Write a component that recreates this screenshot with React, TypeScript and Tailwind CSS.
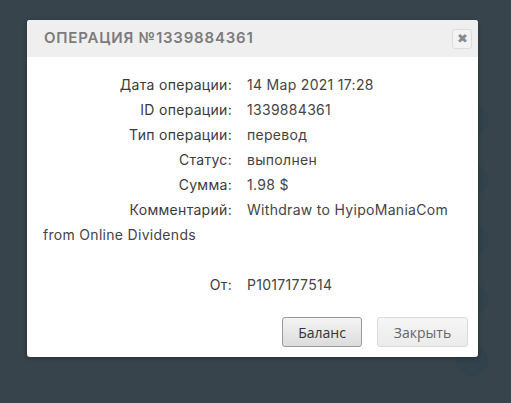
export default function App() {
  const rows = [
    ["Дата операции:", "14 Мар 2021 17:28"],
    ["ID операции:", "1339884361"],
    ["Тип операции:", "перевод"],
    ["Статус:", "выполнен"],
    ["Сумма:", "1.98 $"],
  ];

  return (
    <div className="relative h-[403px] w-[511px] overflow-hidden bg-[#37444c] font-['Inter',sans-serif]">
      {/* faint background dots behind the modal */}
      <div className="absolute top-[104px] left-[456px] h-8 w-8 rounded-full bg-[#31424c]" />
      <div className="absolute top-[164px] left-[456px] h-8 w-8 rounded-full bg-[#31424c]" />
      <div className="absolute top-[224px] left-[456px] h-8 w-8 rounded-full bg-[#31424c]" />
      <div className="absolute top-[284px] left-[456px] h-8 w-8 rounded-full bg-[#31424c]" />
      <div className="absolute top-[344px] left-[456px] h-8 w-8 rounded-full bg-[#31424c]" />

      <div className="relative mt-[20px] ml-[27px] w-[451px] overflow-hidden rounded-[3px] bg-white shadow-[0_1px_4px_rgba(0,0,0,0.3)]">
        <div className="flex h-[37px] items-center justify-between bg-[#efefef] pr-[6px] pl-[17px]">
          <h1 className="text-[15px] font-semibold tracking-[0.8px] text-[#7b7b7b]">
            ОПЕРАЦИЯ №1339884361
          </h1>
          <button className="flex h-[20px] w-[20px] items-center justify-center rounded-[3px] border border-[#dcdcdc] bg-[#f3f3f3] text-[13px] leading-none text-[#8a8a8a]">
            ✖
          </button>
        </div>

        <div className="px-[16px] pt-[15px] text-[14px] leading-[25px] tracking-[0.3px] text-[#3a3a3a]">
          {rows.map(([label, value]) => (
            <div key={label} className="flex">
              <span className="w-[189px] text-right">{label}</span>
              <span className="ml-[15px] text-[#444]">{value}</span>
            </div>
          ))}
          <p>
            <span className="inline-block w-[189px] text-right">Комментарий:</span>
            <span className="ml-[15px] text-[#444]">Withdraw to HyipoManiaCom</span>
            <br />
            <span className="text-[#444]">from Online Dividends</span>
          </p>
          <div className="h-[25px]" />
          <div className="flex">
            <span className="w-[189px] text-right">От:</span>
            <span className="ml-[15px] text-[#444]">P1017177514</span>
          </div>
        </div>

        <div className="flex justify-end gap-[15px] pt-[20px] pr-[10px] pb-[10px] font-['Open_Sans',sans-serif] text-[14px]">
          <button className="h-[30px] w-[80px] rounded-[3px] border border-[#9a9a9a] bg-gradient-to-b from-[#f4f4f4] to-[#dcdcdc] text-[#333]">
            Баланс
          </button>
          <button className="h-[30px] w-[91px] rounded-[3px] border border-[#dadada] bg-gradient-to-b from-[#f6f6f6] to-[#ebebeb] text-[#666]">
            Закрыть
          </button>
        </div>
      </div>
    </div>
  );
}
